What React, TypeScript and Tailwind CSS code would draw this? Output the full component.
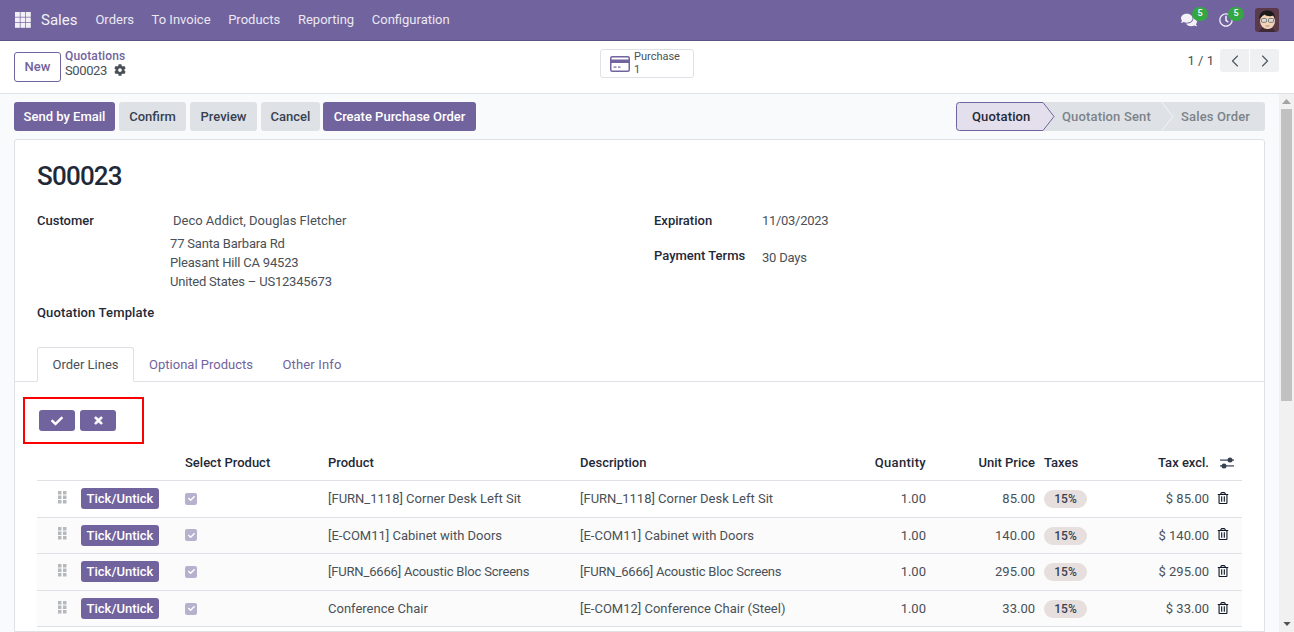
import React from "react";
import { FaCheck, FaTimes, FaComments, FaCog, FaRegTrashAlt, FaRegClock } from "react-icons/fa";
import { LuChevronLeft, LuChevronRight } from "react-icons/lu";

const rows = [
  ["[FURN_1118] Corner Desk Left Sit", "[FURN_1118] Corner Desk Left Sit", "85.00", "$ 85.00"],
  ["[E-COM11] Cabinet with Doors", "[E-COM11] Cabinet with Doors", "140.00", "$ 140.00"],
  ["[FURN_6666] Acoustic Bloc Screens", "[FURN_6666] Acoustic Bloc Screens", "295.00", "$ 295.00"],
  ["Conference Chair", "[E-COM12] Conference Chair (Steel)", "33.00", "$ 33.00"],
];
const grid = "grid grid-cols-[44px_104px_143px_252px_260px_86px_109px_85px_89px_33px] items-center";

function Avatar() {
  return (
    <svg width="24" height="24" viewBox="0 0 24 24" className="rounded-[3px]">
      <rect width="24" height="24" fill="#5a3a4a" />
      <path d="M4 24c1-4 4-5 8-5s7 1 8 5z" fill="#3d2a35" />
      <ellipse cx="12.500" cy="13" rx="7.500" ry="8" fill="#f3d3b8" />
      <path d="M4.500 12C3.500 5 8 2 13 2.500c4.500 0 7.500 3 7 9l-1.500-4c-3 1-7 1-9-1-1 1-3.500 2-5 5.500z" fill="#1d1a1c" />
      <rect x="6.500" y="10.500" width="5" height="3.800" rx="1" fill="#d9dcdc" stroke="#555" strokeWidth=".7" />
      <rect x="13.500" y="10.500" width="5" height="3.800" rx="1" fill="#d9dcdc" stroke="#555" strokeWidth=".7" />
      <path d="M10.500 18h4" stroke="#a8705a" strokeWidth=".8" />
    </svg>
  );
}

function Nav() {
  return (
    <div className="h-[41px] shrink-0 bg-[#71639e] border-b border-[#5f5386] flex items-center text-white">
      <svg width="16" height="16" viewBox="0 0 16 16" className="ml-[15px]" fill="#f2f0f6">
        {[0, 5.5, 11].flatMap((x) => [0, 5.5, 11].map((y) => <rect key={`${x}${y}`} x={x} y={y} width="4.800" height="4.800" />))}
      </svg>
      <span className="ml-[10px] text-[15px] text-[#f3f1f7]">Sales</span>
      <div className="ml-[18px] flex gap-[17.6px] text-[13px] text-[#ebe8f2]">
        <span>Orders</span><span>To Invoice</span><span>Products</span><span>Reporting</span><span>Configuration</span>
      </div>
      <div className="ml-auto flex items-center mr-[15px]">
        <span className="relative mr-[22px] text-[#f3f1f7]">
          <FaComments size={16} />
          <span className="absolute -top-[5px] left-[11px] w-[16px] h-[14px] rounded-full bg-[#34a745] text-[9px] font-bold flex items-center justify-center">5</span>
        </span>
        <span className="relative mr-[22px] text-[#f3f1f7]">
          <FaRegClock size={14} />
          <span className="absolute -top-[6px] left-[9px] w-[16px] h-[14px] rounded-full bg-[#34a745] text-[9px] font-bold flex items-center justify-center">5</span>
        </span>
        <Avatar />
      </div>
    </div>
  );
}

function ControlPanel() {
  return (
    <div className="h-[53px] shrink-0 bg-white border-b border-[#dee2e6] flex items-center pl-[14px] pr-[15px] relative">
      <div className="w-[47px] h-[30px] border border-[#71639e] rounded-[3px] text-[#71639e] text-[13px] font-medium flex items-center justify-center">New</div>
      <div className="ml-[4px] -mt-[8px]">
        <div className="text-[#71639e] text-[12px] font-medium leading-[14px] tracking-[0.15px]">Quotations</div>
        <div className="flex items-center gap-[7px] text-[#495057] text-[13px] leading-[15px]"><span className="tracking-[-0.4px]">S00023</span> <FaCog size={12} /></div>
      </div>
      <div className="absolute left-[600px] top-[8px] w-[94px] h-[29px] border border-[#dee2e6] rounded-[3px] flex items-center pl-[9px]">
        <svg width="20" height="16" viewBox="0 0 20 16"><rect x=".75" y=".75" width="18.500" height="14.500" rx="1.500" fill="none" stroke="#71639e" strokeWidth="1.500" /><rect x="1" y="3.500" width="18" height="3.500" fill="#71639e" /><rect x="3.500" y="10.500" width="3" height="1.200" fill="#71639e" /><rect x="8" y="10.500" width="2.500" height="1.200" fill="#71639e" /></svg>
        <div className="ml-[4px] -mt-[1px] text-[11px] leading-[13px] text-[#495057]"><div>Purchase</div><div>1</div></div>
      </div>
      <div className="ml-auto flex items-center -mt-[13px]">
        <span className="text-[#495057] text-[13px] mr-[6px]">1 / 1</span>
        <div className="w-[29px] h-[23px] bg-[#eff0f2] rounded-l-[3px] flex items-center justify-center text-[#50585f] mr-px"><LuChevronLeft size={20} strokeWidth={1.4} /></div>
        <div className="w-[29px] h-[23px] bg-[#eff0f2] rounded-r-[3px] flex items-center justify-center text-[#50585f]"><LuChevronRight size={20} strokeWidth={1.4} /></div>
      </div>
    </div>
  );
}

function Btn({ primary, className, children }: { primary?: boolean; className: string; children: React.ReactNode }) {
  return (
    <div className={`${className} h-[29px] rounded-[3px] text-[13px] font-medium flex items-center justify-center ${primary ? "bg-[#71639e] text-white" : "bg-[#dee1e5] text-[#374151]"}`}>{children}</div>
  );
}

function ActionBar() {
  return (
    <div className="flex items-start h-[45px] shrink-0 pt-[8px] pl-[14px] pr-[14px]">
      <Btn primary className="w-[101px]">Send by Email</Btn>
      <Btn className="w-[67px] ml-[4px]">Confirm</Btn>
      <Btn className="w-[67px] ml-[4px]">Preview</Btn>
      <Btn className="w-[59px] ml-[4px]">Cancel</Btn>
      <Btn primary className="w-[153px] ml-[3px]">Create Purchase Order</Btn>
      <div className="ml-auto w-[309px] h-[29px] bg-[#dee2e6] rounded-[3px] relative flex items-center text-[13px] font-medium tracking-[0.15px] text-[#7c8289]">
        <svg width="309" height="29" viewBox="0 0 309 29" className="absolute left-0 top-0" fill="none">
          <path d="M3.500.5H87l11 14-11 14H3.500a3 3 0 0 1-3-3V3.500a3 3 0 0 1 3-3z" fill="#e3dfec" stroke="#71639e" />
          <path d="M206 .5l11 14-11 14" stroke="#f3f4f6" />
        </svg>
        <span className="relative w-[106px] pl-[16px] text-[#1f2937]">Quotation</span>
        <span className="relative w-[119px]">Quotation Sent</span>
        <span className="relative">Sales Order</span>
      </div>
    </div>
  );
}

function Sheet() {
  return (
    <div className="ml-[14px] mr-[14px] bg-white border border-[#dee2e6] rounded-t-[3px] flex-1 min-h-0 overflow-hidden">
      <div className="pl-[22px] pr-[22px]">
        <div className="pt-[20px] text-[26px] font-medium text-[#1f2937] leading-[32px] tracking-[-0.8px]">S00023</div>
        <div className="flex mt-[19px] text-[13px] text-[#495057]">
          <div className="w-[617px] flex flex-col">
            <div className="flex">
              <div className="w-[133px] font-medium text-[#1f2937] leading-[19px]">Customer</div>
              <div className="leading-[19px]">
                <div className="pl-[3px] mb-[4px]">Deco Addict, Douglas Fletcher</div>
                <div className="tracking-[-0.18px]">77 Santa Barbara Rd</div>
                <div className="tracking-[-0.18px]">Pleasant Hill CA 94523</div>
                <div className="tracking-[-0.2px]">United States – US12345673</div>
              </div>
            </div>
            <div className="mt-[12px] font-medium text-[#1f2937] leading-[19px] tracking-[0.15px]">Quotation Template</div>
          </div>
          <div className="flex flex-col gap-[16px]">
            <div className="flex leading-[19px]"><div className="w-[108px] font-medium text-[#1f2937]">Expiration</div><div className="tracking-[-0.3px]">11/03/2023</div></div>
            <div className="flex leading-[19px]"><div className="w-[108px] font-medium text-[#1f2937]">Payment Terms</div><div className="pt-[2px] tracking-[-0.2px]">30 Days</div></div>
          </div>
        </div>
      </div>
      <div className="mt-[25px] h-[35px] border-b border-[#dee2e6] flex items-end pl-[22px] text-[13px] text-[#71639e]">
        <div className="w-[97px] h-[35px] pt-px -mb-px border border-[#dee2e6] border-b-white bg-white rounded-t-[3px] text-[#495057] flex items-center justify-center">Order Lines</div>
        <div className="w-[134px] h-[34px] pt-px flex items-center justify-center">Optional Products</div>
        <div className="w-[88px] h-[34px] pt-px flex items-center justify-center tracking-[0.15px]">Other Info</div>
      </div>
      <div className="pl-[8px] pt-[15px]">
        <div className="w-[121px] h-[47px] border-2 border-[#ff0000] flex items-start pl-[14px] pt-[11px] gap-[5px]">
          <div className="w-[36px] h-[21px] bg-[#71639e] rounded-[3px] flex items-center justify-center text-white"><FaCheck size={12} /></div>
          <div className="w-[36px] h-[21px] bg-[#71639e] rounded-[3px] flex items-center justify-center text-white"><FaTimes size={11} stroke="currentColor" strokeWidth={40} /></div>
        </div>
      </div>
      <div className="mx-[22px] w-[1205px] text-[13px] text-[#495057]">
        <div className={`${grid} h-[37px] pt-px border-b border-[#dee2e6] font-medium text-[#1f2937]`}>
          <div /><div /><div>Select Product</div><div>Product</div><div>Description</div>
          <div className="text-right tracking-[0.3px]">Quantity</div><div className="text-right">Unit Price</div>
          <div className="pl-[9px]">Taxes</div><div className="text-right">Tax excl.</div>
          <div className="pl-[11px]">
            <svg width="14" height="12" viewBox="0 0 14 12" className="block" fill="#374151">
              <rect x="0" y="2.500" width="14" height="1.200" />
              <rect x="0" y="8.300" width="14" height="1.200" />
              <circle cx="10" cy="3" r="2.500" />
              <circle cx="4" cy="9" r="2.500" />
            </svg>
          </div>
        </div>
        {rows.map((r, i) => (
          <div key={i} className={`${grid} h-[36.6px] border-b border-[#dee2e6] ${i ? "bg-[#fbfbfb]" : ""}`}>
            <div className="pl-[21px]">
              <svg width="9" height="13" viewBox="0 0 9 13" fill="#b5b9bd" className="block -mt-[3px]">{[0, 5].flatMap((x) => [0, 4.500, 9].map((y) => <rect key={`${x}${y}`} x={x} y={y} width="3.500" height="3.500" />))}</svg>
            </div>
            <div><span className="inline-flex w-[78px] h-[21px] bg-[#71639e] rounded-[3px] text-white font-medium items-center justify-center">Tick/Untick</span></div>
            <div><span className="w-[12px] h-[12px] rounded-[2px] bg-[#b8b1ce] flex items-center justify-center text-white"><FaCheck size={7} /></span></div>
            <div className={i === 2 ? "tracking-[-0.18px]" : ""}>{r[0]}</div><div className={i === 2 ? "tracking-[-0.18px]" : ""}>{r[1]}</div>
            <div className="text-right">1.00</div><div className="text-right">{r[2]}</div>
            <div className="pl-[8px]"><span className="inline-flex w-[43px] h-[18px] ml-px rounded-full bg-[#e6dfdd] text-[#374151] text-[12px] font-medium items-center justify-center">15%</span></div>
            <div className="text-right">{r[3]}</div>
            <div className="pl-[8px] text-[#111827] -mt-[2px]"><FaRegTrashAlt size={12} /></div>
          </div>
        ))}
      </div>
    </div>
  );
}

export default function App() {
  return (
    <div className="h-[632px] w-[1294px] overflow-hidden flex flex-col bg-[#f9fafb] font-['Roboto','Noto_Sans',sans-serif]">
      <Nav />
      <ControlPanel />
      <div className="flex flex-1 min-h-0">
        <div className="flex-1 flex flex-col min-w-0">
          <ActionBar />
          <Sheet />
        </div>
        <div className="w-[15px] shrink-0 bg-[#f1f1f1] flex flex-col items-center">
          <svg width="9" height="5" viewBox="0 0 9 5" className="mt-[5px]"><path d="M4.500 0L9 5H0z" fill="#a3a3a3" /></svg>
          <div className="w-[11px] h-[292px] mt-[5px] bg-[#c1c1c1]" />
          <svg width="8" height="4" viewBox="0 0 9 5" className="mt-auto mb-[6px]"><path d="M0 0h9L4.500 5z" fill="#505050" /></svg>
        </div>
      </div>
    </div>
  );
}
